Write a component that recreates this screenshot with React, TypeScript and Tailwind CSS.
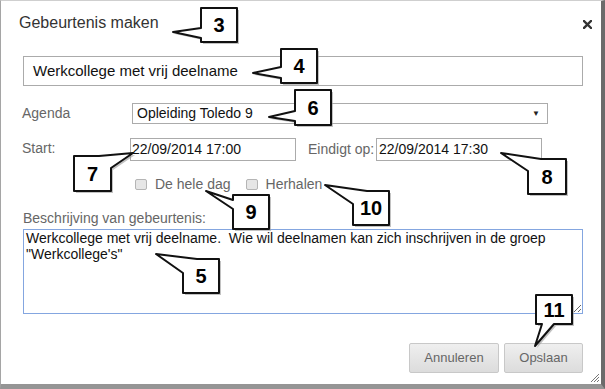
import React from 'react';

type Pt = [number, number];

const callouts: { n: string; box: [number, number, number, number]; pts: Pt[] }[] = [
  { n: '3', box: [200, 7, 236, 41], pts: [[200, 7], [236, 7], [236, 41], [200, 41], [200, 37], [172, 31], [200, 27]] },
  { n: '4', box: [280, 48, 316, 82], pts: [[280, 48], [316, 48], [316, 82], [280, 82], [280, 77], [252, 72], [280, 66]] },
  { n: '6', box: [294, 89, 330, 124], pts: [[294, 89], [330, 89], [330, 124], [294, 124], [294, 120], [268, 116], [294, 110]] },
  { n: '7', box: [73, 155, 110, 190], pts: [[73, 155], [98, 155], [132, 152], [110, 167], [110, 190], [73, 190]] },
  { n: '8', box: [527, 158, 565, 193], pts: [[540, 158], [565, 158], [565, 193], [527, 193], [527, 170], [500, 152]] },
  { n: '9', box: [232, 194, 268, 228], pts: [[232, 194], [268, 194], [268, 228], [232, 228], [232, 208], [205, 190], [232, 199]] },
  { n: '10', box: [352, 190, 388, 224], pts: [[366, 190], [388, 190], [388, 224], [352, 224], [352, 203], [324, 184]] },
  { n: '5', box: [182, 258, 218, 292], pts: [[196, 258], [218, 258], [218, 292], [182, 292], [182, 272], [155, 253]] },
  { n: '11', box: [535, 294, 571, 323], pts: [[535, 294], [571, 294], [571, 323], [553, 323], [534, 345], [541, 323], [535, 323]] },
];

function Callouts() {
  return (
    <svg className="absolute left-0 top-0 pointer-events-none" width={605} height={389}>
      {callouts.map((c) => {
        const d = c.pts.map((p) => p.join(',')).join(' ');
        const cx = (c.box[0] + c.box[2]) / 2;
        const cy = (c.box[1] + c.box[3]) / 2;
        return (
          <g key={c.n}>
            <polygon points={d} transform="translate(2,2)" fill="#9a9a9a" opacity={0.6} />
            <polygon points={d} fill="#fff" stroke="#111" strokeWidth={2} strokeLinejoin="round" />
            <text
              x={cx}
              y={cy + 7}
              textAnchor="middle"
              fontFamily="'Liberation Sans', Arial, sans-serif"
              fontWeight={700}
              fontSize={20}
              fill="#000"
            >
              {c.n}
            </text>
          </g>
        );
      })}
    </svg>
  );
}

function Check({ label }: { label: string }) {
  return (
    <div className="flex items-center">
      <span className="w-[12px] h-[11px] rounded-[2px] border border-[#b5b5b5] bg-[#e6e6e6]" />
      <span className="ml-[8px] text-[14px] text-[#666]">{label}</span>
    </div>
  );
}

export default function App() {
  return (
    <div
      className="relative w-[605px] h-[389px] bg-white overflow-hidden border-t border-t-[#cfcfcf] border-l border-l-[#a5a5a5] border-r-[4px] border-r-[#6b6b6b] border-b-[5px] border-b-[#959595]"
      style={{ fontFamily: "'Liberation Sans', Arial, sans-serif" }}
    >
      {/* Header */}
      <div className="flex items-center justify-between h-[20px] mt-[12px] pl-[18px] pr-[9px]">
        <span className="text-[16px] leading-5 text-[#333]">Gebeurtenis maken</span>
        <svg width="9" height="9" viewBox="0 0 9 9" className="mt-[2px]">
          <path d="M1 1 L8 8 M8 1 L1 8" stroke="#333" strokeWidth="2.4" strokeLinecap="square" />
        </svg>
      </div>

      <div className="pl-[22px] pr-[18px]">
        {/* Title input */}
        <div className="mt-[23px] h-[30px] border border-[#ababab] flex items-center pl-[9px] text-[15px] text-[#111]">
          Werkcollege met vrij deelname
        </div>

        {/* Agenda */}
        <div className="mt-[17px] flex items-center h-[21px]">
          <span className="w-[110px] -ml-[1px] text-[14px] text-[#666]">Agenda</span>
          <div className="w-[416px] h-[21px] border border-[#ababab] flex items-center justify-between pl-[4px] pr-[7px] text-[14px] text-[#111]">
            <span>Opleiding Toledo 9</span>
            <span className="text-[8px] text-[#222]">▼</span>
          </div>
        </div>

        {/* Start / end */}
        <div className="mt-[14px] flex items-center h-[23px]">
          <span className="w-[108px] -ml-[1px] text-[14px] text-[#666] -mt-[2px]">Start:</span>
          <div className="w-[166px] h-[23px] border border-[#ababab] flex items-center pl-[1px] text-[14px] text-[#111]">
            22/09/2014 17:00
          </div>
          <span className="ml-[12px] w-[68px] text-[14px] text-[#666]">Eindigt op:</span>
          <div className="w-[166px] h-[23px] border border-[#ababab] flex items-center pl-[2px] text-[14px] text-[#111]">
            22/09/2014 17:30
          </div>
        </div>

        {/* Checkboxes */}
        <div className="mt-[15px] h-[16px] flex items-center pl-[112px] gap-[15px]">
          <Check label="De hele dag" />
          <Check label="Herhalen" />
        </div>

        {/* Description */}
        <div className="mt-[18px] h-[16px] leading-4 text-[14px] text-[#666]">Beschrijving van gebeurtenis:</div>
        <textarea
          readOnly
          defaultValue={'Werkcollege met vrij deelname.  Wie wil deelnamen kan zich inschrijven in de groep "Werkcollege\'s"'}
          className="mt-[3px] block w-full h-[85px] border border-[#84a6e0] outline-none px-[2px] pt-0 text-[14px] leading-4 text-[#111] resize-y"
          style={{ fontFamily: "'Liberation Sans', Arial, sans-serif" }}
        />

        {/* Buttons */}
        <div className="mt-[29px] flex justify-end gap-[5px]">
          <button className="w-[90px] h-[30px] rounded-[2px] border border-[#c8c8c8] bg-gradient-to-b from-[#efefef] to-[#dcdcdc] text-[13px] text-[#666]">
            Annuleren
          </button>
          <button className="w-[79px] h-[30px] rounded-[2px] border border-[#c8c8c8] bg-gradient-to-b from-[#efefef] to-[#dcdcdc] text-[13px] text-[#666]">
            Opslaan
          </button>
        </div>
      </div>

      {/* window resize grip */}
      <svg className="absolute right-[1px] bottom-[1px]" width="11" height="11" viewBox="0 0 11 11">
        <path d="M10 2 L2 10 M10 5 L5 10 M10 8 L8 10" stroke="#777" strokeWidth="1" />
      </svg>

      <Callouts />
    </div>
  );
}
